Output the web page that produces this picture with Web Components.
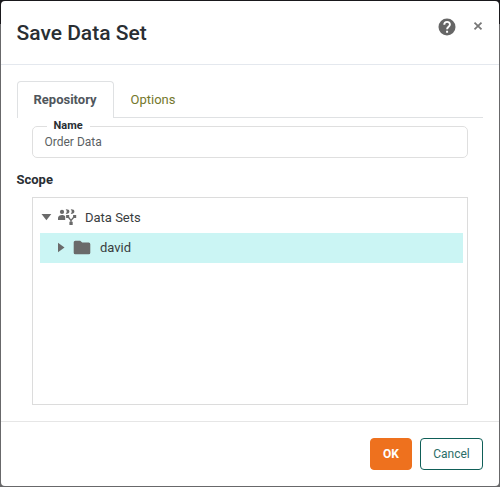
<!DOCTYPE html>
<html lang="en"><head><meta charset="utf-8"><title>Save Data Set</title>
<style>
html,body{height:100%}
body{margin:0;overflow:hidden;font-family:Roboto,sans-serif;font-size:13px;color:#292e33;background:linear-gradient(#19181c 24px,#68686a 24px)}
</style></head><body>
<modal-dialog heading="Save Data Set">
  <tab-bar>
    <tab-item active>Repository</tab-item><tab-item>Options</tab-item>
  </tab-bar>
  <text-field label="Name">Order Data</text-field>
  <section-label>Scope</section-label>
  <tree-view>
    <tree-row icon="shared" open>Data Sets</tree-row>
    <tree-row icon="folder" selected>david</tree-row>
  </tree-view>
  <push-button slot="footer" primary>OK</push-button>
  <push-button slot="footer">Cancel</push-button>
</modal-dialog>
<script>
const define = (name, render) => customElements.define(name, class extends HTMLElement {
  connectedCallback() {
    if (this.shadowRoot) return;
    const t = document.createElement('template');
    t.innerHTML = '<style>:host,*{box-sizing:border-box}svg{display:block}</style>' + render(this);
    this.attachShadow({mode: 'open'}).append(t.content.cloneNode(true));
  }
});

define('modal-dialog', el => `<style>
:host{display:flex;flex-direction:column;height:485px;margin:1px;background:#fff;border-radius:4px;overflow:hidden}
header{display:flex;height:64px;border-bottom:1px solid #e4e8ee;padding:0 16px 0 15.5px;flex:none}
h1{margin:0;flex:1;font-size:21px;font-weight:500;line-height:65px;height:63px}
.help{margin:16px 16px 0 0;width:20px;height:20px}
.close{margin:20px 0 0;width:10px;height:10px}
main{flex:1;padding:16px 16px 0;min-height:0}
footer{display:flex;justify-content:flex-end;gap:8px;height:65px;padding:16px 16px 0;border-top:1px solid #e6e6e6;flex:none}
</style>
<header><h1>${el.getAttribute('heading')}</h1>
<svg class="help" viewBox="0 0 24 24"><circle cx="12" cy="12" r="10.200" fill="#666"/><path d="M8.700 9.400C8.700 4.800 15.500 4.800 15.500 9c0 2.600-3.400 2.700-3.400 5.600" fill="none" stroke="#fff" stroke-width="2.300"/><path d="M10.900 16.500h2.400v2.400h-2.400z" fill="#fff"/></svg>
<svg class="close" viewBox="0 0 10 10" fill="none" stroke="#777" stroke-width="1.800"><path d="M1.500 1.700L8.500 8.300M8.500 1.700L1.500 8.300"/></svg>
</header><main><slot></slot></main><footer><slot name="footer"></slot></footer>`);

define('tab-bar', () => `<style>:host{display:flex;height:37px;border-bottom:1px solid #dfe1e3}</style><slot></slot>`);

define('tab-item', () => `<style>
:host{display:block;height:37px;padding:0 15.500px;line-height:36px;color:#74782c;border:1px solid transparent;border-bottom:0}
:host([active]){width:97px;padding:0 15.500px;color:#50565c;font-weight:700;background:#fff;border-color:#dfe1e3;border-radius:4px 4px 0 0}
</style><slot></slot>`);

define('text-field', el => `<style>
:host{display:block;margin:1px 15px 0}
fieldset{margin:0;padding:0 11.500px;height:39px;min-width:0;border:1px solid #dfdfdf;border-radius:5px}
legend{padding:0 7px;margin-left:2px;font-size:11px;font-weight:700;line-height:14px;height:14px}
div{font-size:12px;line-height:18px;color:#5b5f63}
</style><fieldset><legend>${el.getAttribute('label')}</legend><div><slot></slot></div></fieldset>`);

define('section-label', () => `<style>:host{display:block;margin:14px 0 0 -.5px;height:25px;line-height:16px;font-weight:700;font-size:13px}</style><slot></slot>`);

define('tree-view', () => `<style>:host{display:block;margin:0 15px;height:208px;border:1px solid #dcdcdc;padding:5px 4px 0 7px}</style><slot></slot>`);

const icons = {
  shared: `<svg width="20" height="18" viewBox="0 0 20 18" fill="#6a6a6a"><circle cx="5" cy="2.900" r="2.100"/><path d="M1 11V9c0-2 2-3 4-3 1.500 0 2.500.6 3.200 1.400V11z"/><path d="M8.700.3c2.600-.1 3.700.8 3.700 2.300s-1.100 2.500-3.700 2.500c1.400-1.600 1.400-3.200 0-4.800zM13.700.3c2.600-.1 3.700.8 3.700 2.300s-1.100 2.500-3.700 2.500c1.400-1.600 1.400-3.200 0-4.800z"/><path d="M10.800 7.500L14 11.500l3.400-4M14 11v3" fill="none" stroke="#6a6a6a" stroke-width="1.300"/><path d="M9.100 6h3.100v3H9.100zM16.100 6h3.100v3h-3.100zM12.400 12.700h3.300v3.200h-3.300z"/></svg>`,
  folder: `<svg width="20" height="18" viewBox="0 0 20 18" fill="#6a6a6a"><path d="M3.300 1.700h4.900l2 1.900h6.500a1.600 1.600 0 0 1 1.600 1.600v8.500a1.600 1.600 0 0 1-1.600 1.600H3.300a1.600 1.600 0 0 1-1.600-1.600V3.300a1.600 1.600 0 0 1 1.600-1.600z"/></svg>`
};
define('tree-row', el => `<style>
:host{display:flex;align-items:center;height:30px;padding-left:1px;color:#393d40}
:host([selected]){background:#cbf5f4;padding-left:16px}
.arrow{width:11px;height:11px;margin:0 5px 1px 0}
span{margin-left:8px;line-height:16px}
</style><svg class="arrow" viewBox="0 0 11 11" fill="#6a6a6a"><path d="${el.hasAttribute('open') ? 'M.5 2h9.800L5.400 8.300z' : 'M2 .8v9.400L8.500 5.500z'}"/></svg>${icons[el.getAttribute('icon')]}<span><slot></slot></span>`);

define('push-button', () => `<style>
:host{display:block;height:32px;width:63px;border:1px solid #0f5f58;border-radius:4px;color:#2a6d67;text-align:center;font-size:12px;line-height:30px}
:host([primary]){width:42px;background:#ee711e;border-color:#ee711e;color:#fff;font-weight:700}
</style><slot></slot>`);
</script></body></html>
